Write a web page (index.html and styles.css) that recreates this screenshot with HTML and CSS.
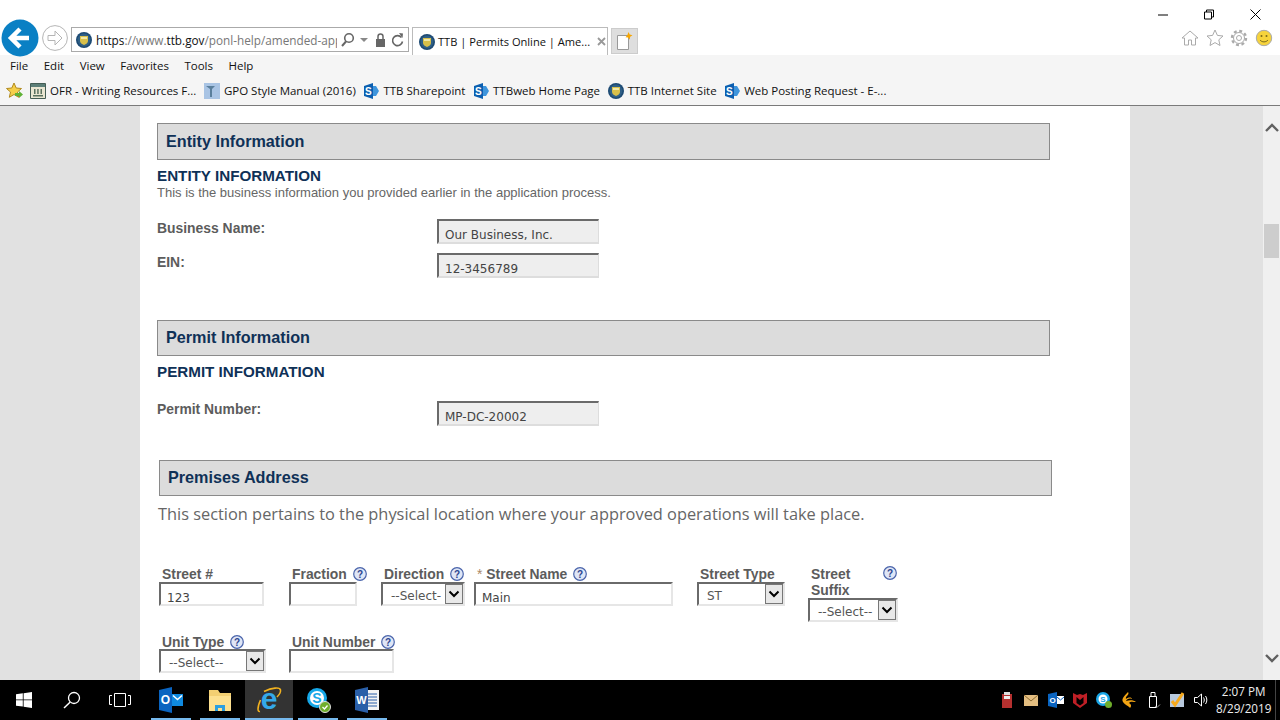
FILE: index.html
```html
<!DOCTYPE html>
<html lang="en">
<head>
<meta charset="utf-8">
<title>TTB | Permits Online</title>
<link rel="stylesheet" href="styles.css">
</head>
<body>
<svg class="defs" aria-hidden="true">
  <symbol id="seal" viewBox="0 0 16 16">
    <circle cx="8" cy="8" r="8" fill="#1d4a73"/>
    <circle cx="8" cy="8" r="6.4" fill="#2f5f86"/>
    <path d="M4 4h8v5c0 2-2 3-4 4-2-1-4-2-4-4z" fill="#d8c04a"/>
    <path d="M5 5h6v2H5z" fill="#f2e9a6"/>
  </symbol>
  <symbol id="sp" viewBox="0 0 16 16">
    <path d="M1 3l9-3v16l-9-3z" fill="#0c5fb0"/>
    <path d="M10 3h3l3 5-3 5h-3z" fill="#3f95dc"/>
  </symbol>
  <symbol id="help" viewBox="0 0 14 14">
    <circle cx="7" cy="7" r="6.3" fill="#dfe6f6" stroke="#4a64ab" stroke-width="1.2"/>
  </symbol>
</svg>

<header class="chrome">
  <div class="titlebar">
    <div class="nav">
      <svg class="back" viewBox="0 0 38 38"><circle cx="19" cy="19" r="18.5" fill="#0a80c4"/><path d="M28 19H12M19 10l-9 9 9 9" fill="none" stroke="#fff" stroke-width="4.5"/></svg>
      <svg class="forward" viewBox="0 0 26 26"><circle cx="13" cy="13" r="12.4" fill="#fff" stroke="#b5b5b5"/><path d="M6 10.500h7V6l7 7-7 7v-4.500H6z" fill="none" stroke="#b5b5b5"/></svg>
    </div>
    <div class="address">
      <svg class="fav16"><use href="#seal"/></svg>
      <span class="url"><b>https</b>://www.<b>ttb.gov</b>/ponl-help/amended-app</span>
      <svg class="addr-tools" viewBox="0 0 66 16"><circle cx="9" cy="6" r="4.300" fill="none" stroke="#666" stroke-width="1.600"/><path d="M6 9.500L2 14" stroke="#666" stroke-width="2"/><path d="M20 6h8l-4 4z" fill="#888"/><path d="M36 7h9v8h-9z" fill="#666"/><path d="M38 7V4.500a2.500 2.500 0 0 1 5 0V7" fill="none" stroke="#666" stroke-width="1.500"/><path d="M61.500 5.500a5 5 0 1 0 1 4" fill="none" stroke="#666" stroke-width="1.600"/><path d="M59 1l4 .500-.500 4.500z" fill="#666"/></svg>
    </div>
    <div class="tab">
      <svg class="fav16"><use href="#seal"/></svg>
      <span class="tab-title">TTB | Permits Online | Ame...</span>
      <svg class="tab-x" viewBox="0 0 9 9"><path d="M1 1l7 7M8 1L1 8" stroke="#999" stroke-width="1.800"/></svg>
    </div>
    <div class="newtab">
      <svg class="newtab-icon" viewBox="0 0 16 18"><path d="M.5 3.500h11v14H.5z" fill="#fff" stroke="#999"/><path d="M11.500 0l1.200 2.500 2.800.7-2.300 1.500-.5 3-1.500-2.300-2.700-.2 1.800-2z" fill="#f7a600"/></svg>
    </div>
    <div class="win-side">
      <div class="win-buttons">
        <svg class="win-btn" viewBox="-16 0 46 14"><path d="M0 7h10" stroke="#000"/></svg>
        <svg class="win-btn" viewBox="-16 0 46 14"><path d="M.5 3.500h7v7h-7zM2.500 3.500v-2h7v7h-2" transform="translate(0 .5)" fill="none" stroke="#000"/></svg>
        <svg class="win-btn" viewBox="-16 0 46 14"><path d="M.5 1.500l10 10M10.500 1.500l-10 10" stroke="#000" fill="none"/></svg>
      </div>
      <div class="ie-tools">
        <svg class="tool" viewBox="0 0 18 18"><path d="M1 9l8-7 8 7h-2.500v7h-4v-5h-3v5h-4V9z" fill="#fff" stroke="#aaa"/></svg>
        <svg class="tool" viewBox="0 0 18 18"><path d="M9 1l2.400 5.400 5.600.6-4.200 3.800 1.200 5.700L9 13.600 4 16.500l1.200-5.700L1 7l5.600-.6z" fill="#fff" stroke="#aaa"/></svg>
        <svg class="tool" viewBox="0 0 18 18"><circle cx="9" cy="9" r="7" fill="none" stroke="#aaa" stroke-width="2.400" stroke-dasharray="2.900 2.600"/><circle cx="9" cy="9" r="5.500" fill="#fff" stroke="#aaa"/><circle cx="9" cy="9" r="2.500" fill="#fff" stroke="#aaa"/></svg>
        <svg class="tool" viewBox="0 0 18 18"><circle cx="9" cy="9" r="7.700" fill="#f6d33c" stroke="#aaa"/><circle cx="6.500" cy="7" r="1" fill="#7b6a1a"/><circle cx="11.500" cy="7" r="1" fill="#7b6a1a"/><path d="M5 11c2 2.500 6 2.500 8 0" fill="none" stroke="#7b6a1a"/></svg>
      </div>
    </div>
  </div>
  <nav class="menubar">
    <span>File</span><span>Edit</span><span>View</span><span>Favorites</span><span>Tools</span><span>Help</span>
  </nav>
  <div class="favbar">
    <svg class="fav-star" viewBox="0 0 18 18"><path d="M8 1l2.200 5 5.300.5-4 3.500 1.200 5.300L8 12.500 3.300 15.300 4.500 10l-4-3.500L5.800 6z" fill="#f5cf4a" stroke="#b08a20"/><path d="M9 11h4V9l4 3.500-4 3.500v-2H9z" fill="#5fb135"/></svg>
    <span class="fav"><svg class="fav-ico" viewBox="0 0 16 16"><path d="M.5.500h15v15H.5z" fill="#e9e6d2" stroke="#445d55"/><path d="M1 1h14v3H1z" fill="#5c7f78"/><path d="M3 12h10v1.500H3zM4 6h1.500v5H4zM7.200 6h1.500v5H7.200zM10.500 6H12v5h-1.500z" fill="#59705f"/></svg>OFR - Writing Resources F...</span>
    <span class="fav"><svg class="fav-ico" viewBox="0 0 16 16"><path d="M0 0h16v16H0z" fill="#a9c4e4"/><path d="M2 3h9L8 6v8H6V6z" fill="#5a7f9c"/></svg>GPO Style Manual (2016)</span>
    <span class="fav"><svg class="fav-ico" viewBox="0 0 16 16"><use href="#sp"/><text class="sp-s" x="5.400" y="11.500">S</text></svg>TTB Sharepoint</span>
    <span class="fav"><svg class="fav-ico" viewBox="0 0 16 16"><use href="#sp"/><text class="sp-s" x="5.400" y="11.500">S</text></svg>TTBweb Home Page</span>
    <span class="fav"><svg class="fav-ico"><use href="#seal"/></svg>TTB Internet Site</span>
    <span class="fav"><svg class="fav-ico" viewBox="0 0 16 16"><use href="#sp"/><text class="sp-s" x="5.400" y="11.500">S</text></svg>Web Posting Request - E-...</span>
  </div>
</header>

<main class="viewport">
  <div class="gutter-left"></div>
  <div class="page">
    <h2 class="band">Entity Information</h2>
    <h3 class="caps">ENTITY INFORMATION</h3>
    <p class="note">This is the business information you provided earlier in the application process.</p>
    <div class="kv first"><label class="kv-label">Business Name:</label><div class="ro">Our Business, Inc.</div></div>
    <div class="kv"><label class="kv-label">EIN:</label><div class="ro">12-3456789</div></div>

    <h2 class="band band-permit">Permit Information</h2>
    <h3 class="caps caps-permit">PERMIT INFORMATION</h3>
    <div class="kv permit"><label class="kv-label">Permit Number:</label><div class="ro">MP-DC-20002</div></div>

    <h2 class="band band-premises">Premises Address</h2>
    <p class="lead">This section pertains to the physical location where your approved operations will take place.</p>

    <div class="addr-row row-one">
      <div class="fld w-num"><div class="lbl ind">Street #</div><div class="in">123</div></div>
      <div class="fld w-frac"><div class="lbl ind">Fraction <svg class="q" viewBox="0 0 14 14"><use href="#help"/><text class="q-t" x="7" y="10.500">?</text></svg></div><div class="in"></div></div>
      <div class="fld w-dir"><div class="lbl ind">Direction <svg class="q" viewBox="0 0 14 14"><use href="#help"/><text class="q-t" x="7" y="10.500">?</text></svg></div><div class="sel"><span class="sel-text">--Select-</span><span class="arrow"><svg viewBox="0 0 12 8"><path d="M1.500 1.500L6 6l4.500-4.500" fill="none" stroke="#000" stroke-width="2"/></svg></span></div></div>
      <div class="fld w-name"><div class="lbl ind"><span class="req">*</span> Street Name <svg class="q" viewBox="0 0 14 14"><use href="#help"/><text class="q-t" x="7" y="10.500">?</text></svg></div><div class="in">Main</div></div>
      <div class="fld w-type"><div class="lbl ind">Street Type</div><div class="sel"><span class="sel-text">ST</span><span class="arrow"><svg viewBox="0 0 12 8"><path d="M1.500 1.500L6 6l4.500-4.500" fill="none" stroke="#000" stroke-width="2"/></svg></span></div></div>
      <div class="fld w-suffix"><div class="lbl ind two"><span>Street<br>Suffix</span><svg class="q" viewBox="0 0 14 14"><use href="#help"/><text class="q-t" x="7" y="10.500">?</text></svg></div><div class="sel"><span class="sel-text">--Select--</span><span class="arrow"><svg viewBox="0 0 12 8"><path d="M1.500 1.500L6 6l4.500-4.500" fill="none" stroke="#000" stroke-width="2"/></svg></span></div></div>
    </div>
    <div class="addr-row row-two">
      <div class="fld w-unit"><div class="lbl ind">Unit Type <svg class="q" viewBox="0 0 14 14"><use href="#help"/><text class="q-t" x="7" y="10.500">?</text></svg></div><div class="sel"><span class="sel-text">--Select--</span><span class="arrow"><svg viewBox="0 0 12 8"><path d="M1.500 1.500L6 6l4.500-4.500" fill="none" stroke="#000" stroke-width="2"/></svg></span></div></div>
      <div class="fld w-unum"><div class="lbl ind">Unit Number <svg class="q" viewBox="0 0 14 14"><use href="#help"/><text class="q-t" x="7" y="10.500">?</text></svg></div><div class="in"></div></div>
    </div>
  </div>
  <div class="gutter-right"></div>
  <div class="scrollbar">
    <svg class="sb-arrow" viewBox="0 0 14 10"><path d="M1 8l6-6 6 6" fill="none" stroke="#606060" stroke-width="2.400"/></svg>
    <div class="sb-thumb"></div>
    <svg class="sb-arrow sb-down" viewBox="0 0 14 10"><path d="M1 2l6 6 6-6" fill="none" stroke="#606060" stroke-width="2.400"/></svg>
  </div>
</main>

<footer class="taskbar">
  <svg class="tb-start" viewBox="0 0 16 16"><path d="M0 2.300l6.800-1v6.200H0zM7.600 1.200L16 0v7.500H7.600zM0 8.300h6.800v6.300L0 13.700zM7.600 8.300H16V16l-8.400-1.200z" fill="#fff"/></svg>
  <svg class="tb-search" viewBox="0 0 18 18"><circle cx="11" cy="7" r="5.500" fill="none" stroke="#fff" stroke-width="1.300"/><path d="M7 11.200L1 17" stroke="#fff" stroke-width="1.500"/></svg>
  <svg class="tb-view" viewBox="0 0 22 14"><path d="M5.500.5h11v13h-11z" fill="none" stroke="#fff"/><path d="M3 2.500H.5v9H3M19 2.500h2.500v9H19" fill="none" stroke="#fff"/></svg>
  <div class="tb-app run"><svg class="tb-ico" viewBox="0 0 26 26"><path d="M1 3l13-3v26L1 23z" fill="#0a64c0"/><path d="M14 7h11v12H14z" fill="#0f8ae0"/><path d="M15 8.500l4.500 4 4.500-4" fill="none" stroke="#fff" stroke-width="1.500"/><text x="7.500" y="17" font-size="12" font-weight="700" fill="#fff" text-anchor="middle" font-family="Liberation Sans">O</text></svg></div>
  <div class="tb-app run"><svg class="tb-ico" viewBox="0 0 26 26"><path d="M2 3h9l2 3h11v18H2z" fill="#f3cf72"/><path d="M2 9h22v15H2z" fill="#fde08f"/><path d="M8 18h10v6H8z" fill="#2d9fe0"/><path d="M11 21h4v3h-4z" fill="#fde08f"/></svg></div>
  <div class="tb-app run active"><svg class="tb-ico-ie" viewBox="-4 -4 34 34"><text x="13" y="21.500" font-size="30" font-weight="700" fill="#34a9ea" text-anchor="middle" font-family="Liberation Sans">e</text><path d="M4.500 13C1 21 1.500 25 4 24.500M8 4.500C16 .5 24 0 24.500 3c.3 2-1.500 5-3.500 7" fill="none" stroke="#f2b21f" stroke-width="1.600"/></svg></div>
  <div class="tb-app run"><svg class="tb-ico" viewBox="0 0 26 26"><circle cx="12" cy="11" r="10" fill="#16a8e8"/><circle cx="12" cy="11" r="7" fill="#fff"/><text x="12" y="16" font-size="14" font-weight="700" fill="#16a8e8" text-anchor="middle" font-family="Liberation Sans">S</text><circle cx="20" cy="20" r="5.500" fill="#6fae2c" stroke="#ddd"/><path d="M17.500 20l2 2 3-3.500" fill="none" stroke="#fff" stroke-width="1.300"/></svg></div>
  <div class="tb-app run"><svg class="tb-ico" viewBox="0 0 26 26"><path d="M12 3h13v20H12z" fill="#f3f3f3"/><path d="M14 7h9M14 10h9M14 13h9M14 16h9M14 19h9" stroke="#2a5fa8"/><path d="M1 3l13-3v26L1 23z" fill="#2a5fa8"/><text x="7.500" y="17" font-size="11" font-weight="700" fill="#fff" text-anchor="middle" font-family="Liberation Sans">W</text></svg></div>
  <div class="tray">
    <svg class="tray-ico" viewBox="0 0 16 16"><path d="M3 2h10v14H3z" fill="#b5302f"/><path d="M5 0h6v3H5z" fill="#ddd"/><path d="M5 4h6v3H5z" fill="#eee"/></svg>
    <svg class="tray-ico" viewBox="0 0 16 16"><path d="M1 3h14v11H1z" fill="#e3bd80"/><path d="M1 3l7 6 7-6" fill="none" stroke="#8a6a30"/></svg>
    <svg class="tray-ico" viewBox="0 0 16 16"><path d="M0 2l9-2v16l-9-2z" fill="#0a64c0"/><path d="M9 4h7v8H9z" fill="#fff"/><path d="M9 5l3.500 3L16 5" fill="none" stroke="#0a64c0"/><text x="4.500" y="11" font-size="8" font-weight="700" fill="#fff" text-anchor="middle" font-family="Liberation Sans">O</text></svg>
    <svg class="tray-ico" viewBox="0 0 16 16"><path d="M1 1l4 2 3-1 3 1 4-2v10l-7 5-7-5z" fill="#c01f26"/><path d="M4.500 5L8 8l3.500-3v6L8 13.500 4.500 11z" fill="#000"/></svg>
    <svg class="tray-ico" viewBox="0 0 16 16"><circle cx="7" cy="7" r="7" fill="#19a6e6"/><circle cx="7" cy="7" r="4.500" fill="#fff"/><text x="7" y="10" font-size="8" font-weight="700" fill="#19a6e6" text-anchor="middle" font-family="Liberation Sans">S</text><circle cx="12.500" cy="12.500" r="3.500" fill="#6fae2c"/></svg>
    <svg class="tray-ico" viewBox="0 0 16 16"><path d="M7 0c2 3-3 4-2 7 2-2 6-2 6 0-3-1-5 0-6 2 3-1 8-1 10 1-2 0-6-1-7 1 2 1 3 3 1 5-1-2-5-3-7-6S4 3 7 0z" fill="#f2a413"/></svg>
    <svg class="tray-ico" viewBox="0 0 16 16"><path d="M4.500 4.500h7v11h-7zM6 .5h4v4H6z" fill="none" stroke="#fff"/><path d="M10 14l2 1.500 3-3" fill="none" stroke="#999"/></svg>
    <svg class="tray-ico" viewBox="0 0 16 16"><path d="M1 2h14v13H1z" fill="#b8c9dd"/><path d="M3 9l3 4 8-12" fill="none" stroke="#f5a81b" stroke-width="3"/></svg>
    <svg class="tray-ico" viewBox="0 0 16 16"><path d="M1.500 5.500h3l4-3.500v12l-4-3.500h-3z" fill="none" stroke="#fff"/><path d="M10.500 5.500c1 1.500 1 3.500 0 5M12.500 4c1.800 2.500 1.800 5.500 0 8" fill="none" stroke="#fff"/></svg>
    <div class="clock"><span>2:07 PM</span><span>8/29/2019</span></div>
    <div class="desk-edge"></div>
  </div>
</footer>
</body>
</html>
```
FILE: styles.css
```css
* { box-sizing: border-box; }
html, body { margin: 0; height: 100%; overflow: hidden; }
body { display: flex; flex-direction: column; width: 1280px; height: 720px; font-family: "Open Sans", "Liberation Sans", sans-serif; background: #fff; }
.defs { position: absolute; width: 0; height: 0; }

/* browser chrome */
.chrome { flex: 0 0 106px; display: flex; flex-direction: column; background: #f5f5f5; border-bottom: 1px solid #7a7a7a; }
.titlebar { height: 55px; flex: none; background: #fff; display: flex; align-items: flex-end; position: relative; }
.nav { width: 71px; height: 36px; display: flex; align-items: center; padding-left: 1px; margin-bottom: -1px; }
.back { width: 38px; height: 38px; flex: none; }
.forward { width: 26px; height: 26px; flex: none; margin-left: 3px; }
.address { width: 338px; height: 25px; margin-bottom: 3px; border: 1px solid #aaa; display: flex; align-items: center; padding-left: 4px; background: #fff; }
.fav16 { width: 16px; height: 16px; flex: none; }
.url { width: 241px; margin-left: 4px; overflow: hidden; white-space: nowrap; font-size: 11.750px; color: #777; }
.url b { font-weight: 400; color: #111; }
.addr-tools { width: 66px; height: 16px; margin-left: 3px; flex: none; }
.tab { width: 196px; height: 28px; margin-left: 3px; border: 1px solid #bbb; border-bottom: 0; background: #fff; display: flex; align-items: center; padding-left: 6px; }
.tab-title { font-size: 11.100px; color: #111; margin-left: 3px; white-space: nowrap; width: 159px; padding-bottom: 1px; }
.tab-x { width: 9px; height: 9px; flex: none; margin-left: 0; }
.newtab { width: 27px; height: 26px; margin: 0 0 1px 3px; background: #dedede; border: 1px solid #ccc; display: flex; align-items: center; justify-content: center; }
.newtab-icon { width: 16px; height: 18px; }
.win-side { margin-left: auto; height: 55px; display: flex; flex-direction: column; align-items: flex-end; }
.win-buttons { display: flex; padding-top: 8px; height: 29px; }
.win-btn { width: 46px; height: 14px; }
.ie-tools { display: flex; gap: 6.700px; padding-right: 7px; }
.tool { width: 18px; height: 18px; }
.menubar { height: 23px; flex: none; display: flex; align-items: center; padding: 0 0 2px 10px; gap: 15.500px; font-size: 11.500px; color: #111; }
.favbar { height: 25px; flex: none; display: flex; align-items: center; padding-left: 6px; font-size: 11.500px; color: #111; white-space: nowrap; }
.fav-star { width: 18px; height: 18px; flex: none; margin-right: 6px; }
.fav { display: flex; align-items: center; gap: 4px; margin-right: 7.600px; }
.fav-ico { width: 16px; height: 16px; flex: none; }
.sp-s { font-family: "Liberation Sans", sans-serif; font-size: 10px; font-weight: 700; fill: #fff; text-anchor: middle; }

/* page */
.viewport { flex: 1; min-height: 0; display: flex; overflow: hidden; background: #e1e1e1; }
.gutter-left { width: 140px; flex: none; }
.gutter-right { width: 133px; flex: none; }
.page { width: 990px; flex: none; background: #fff; padding: 17px 0 0 17px; font-family: "Liberation Sans", Arial, sans-serif; overflow: hidden; }
.band { width: 893px; height: 37px; margin: 0; border: 1px solid #8a8a8a; background: #dcdcdc; color: #0f3157; font-size: 16.200px; font-weight: 700; line-height: 35px; padding-left: 8px; }
.caps { margin: 6px 0 0; font-size: 15.200px; line-height: 19px; color: #0f3157; font-weight: 700; }
.caps-permit { margin-top: 6px; }
.note { margin: 0; font-size: 13px; line-height: 16px; color: #666; }
.kv { display: flex; align-items: flex-start; height: 26px; margin-top: 8px; }
.kv.first { margin-top: 18px; }
.kv.permit { margin-top: 20px; }
.kv-label { width: 280px; margin-top: 1px; font-size: 13.900px; font-weight: 700; color: #5c5c5c; line-height: 16px; }
.kv.permit .kv-label { margin-top: 0; }
.ro { width: 162px; height: 25px; background: #eee; border: 2px solid #6a6a6a; border-right: 1px solid #ddd; border-bottom: 2px solid #ddd; font-family: "DejaVu Sans", sans-serif; font-size: 12px; line-height: 22px; padding: 3px 0 0 6px; color: #444; }
.band-permit { margin-top: 41px; height: 36px; line-height: 33px; }
.band-premises { margin: 33px 0 0 2px; height: 36px; line-height: 33px; }
.lead { margin: 6px 0 0 1px; font-family: "Open Sans", sans-serif; font-size: 16.370px; line-height: 24px; color: #666; white-space: nowrap; }

.addr-row { display: flex; align-items: flex-start; padding-left: 2px; }
.row-one { margin-top: 40px; height: 68px; }
.fld { flex: none; }
.lbl { font-size: 13.900px; font-weight: 700; color: #5c5c5c; line-height: 16px; height: 16px; white-space: nowrap; }
.row-two .lbl { height: 15px; }
.ind { padding-left: 3px; }
.lbl.two { height: 32px; display: flex; justify-content: space-between; align-items: flex-start; padding-right: 1px; }
.req { color: #a86; font-weight: 400; }
.q { width: 14px; height: 14px; vertical-align: -2px; margin-left: 2px; }
.q-t { font-family: "Liberation Sans", sans-serif; font-size: 10px; font-weight: 700; fill: #2c458f; text-anchor: middle; }
.in { height: 24px; border: 2px solid #6a6a6a; border-right: 2px solid #e6e6e6; border-bottom: 2px solid #e6e6e6; background: #fff; font-family: "DejaVu Sans", sans-serif; font-size: 12px; line-height: 22px; padding: 3px 0 0 6px; color: #444; }
.sel { height: 24px; border: 2px solid #6a6a6a; border-right: 2px solid #e6e6e6; border-bottom: 2px solid #e6e6e6; background: #fff; display: flex; align-items: center; justify-content: space-between; font-family: "DejaVu Sans", sans-serif; font-size: 12px; color: #555; padding-left: 8px; overflow: hidden; }
.sel-text { white-space: nowrap; padding-top: 3px; }
.arrow { flex: none; width: 18px; height: 20px; background: #e8e8e8; border: 1px solid #777; display: flex; align-items: center; justify-content: center; }
.arrow svg { width: 12px; height: 8px; }
.w-num { width: 105px; margin-right: 25px; }
.w-frac { width: 68px; margin-right: 24px; }
.w-dir { width: 84px; margin-right: 9px; }
.w-name { width: 199px; margin-right: 24px; }
.w-type { width: 88px; margin-right: 23px; }
.w-suffix { width: 90px; }
.w-unit { width: 107px; margin-right: 23px; }
.w-unum { width: 105px; }

/* scrollbar */
.scrollbar { flex: 1; background: #f0f0f0; display: flex; flex-direction: column; align-items: center; padding-top: 17px; }
.sb-arrow { width: 14px; height: 10px; flex: none; }
.sb-thumb { width: 15px; height: 34px; background: #cdcdcd; margin-top: 91px; }
.sb-down { margin-top: auto; margin-bottom: 17px; }

/* taskbar */
.taskbar { flex: 0 0 40px; background: #000; display: flex; align-items: center; position: relative; color: #fff; }
.tb-start { width: 16px; height: 16px; margin-left: 16px; flex: none; }
.tb-search { width: 18px; height: 18px; margin-left: 31px; flex: none; }
.tb-view { width: 22px; height: 14px; margin-left: 28px; margin-right: 16px; flex: none; }
.tb-app { width: 48px; height: 40px; display: flex; align-items: center; justify-content: center; flex: none; margin-right: 1px; position: relative; }
.tb-app.run::after { content: ""; position: absolute; left: 4px; right: 4px; bottom: 0; height: 2px; background: #76b9ed; }
.tb-app.active { background: #333; }
.tb-app.active::after { left: 0; right: 0; }
.tb-ico { width: 26px; height: 26px; }
.tb-ico-ie { width: 34px; height: 34px; }
.tray { margin-left: auto; display: flex; align-items: center; gap: 8.300px; height: 40px; }
.tray-ico { width: 16px; height: 16px; flex: none; }
.clock { width: 52px; flex: none; display: flex; flex-direction: column; align-items: center; font-size: 11.700px; line-height: 17px; color: #eee; white-space: nowrap; }
.desk-edge { width: 1px; height: 40px; background: #444; margin-right: 4px; margin-left: -3px; }
```
